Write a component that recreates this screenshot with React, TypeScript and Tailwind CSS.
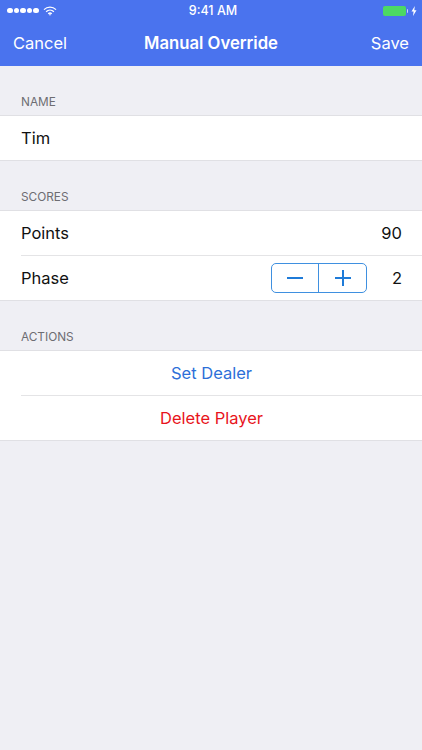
const font = "[font-family:Inter,'Liberation_Sans',sans-serif]";

function Header({ children }: { children: string }) {
  return (
    <div className="h-[50px] px-[21px] flex items-end pb-[7px] text-[11.8px] leading-[14px] text-[#6d6d72] border-b border-[#e0e0e4]">
      <span className="translate-y-[1px]">{children}</span>
    </div>
  );
}

function Row({ children, last }: { children: React.ReactNode; last?: boolean }) {
  return (
    <div className={`h-[45px] bg-white flex items-stretch text-[16.5px] ${last ? "border-b border-[#e0e0e4]" : "pl-[21px]"}`}>
      <div className={`flex-1 flex items-center pr-[20px] pt-[1px] ${last ? "pl-[21px]" : "border-b border-[#e4e4e6]"}`}>{children}</div>
    </div>
  );
}

function Wifi() {
  return (
    <svg width="14" height="10" viewBox="0 0 14 10" fill="none" stroke="white" strokeWidth="1.3" className="ml-[3px]">
      <path d="M1 3.6 C4.4 0.4 9.6 0.4 13 3.6" />
      <path d="M3.1 5.7 C5.3 3.7 8.7 3.7 10.9 5.7" />
      <path d="M5.2 7.7 C6.2 6.9 7.8 6.9 8.8 7.7" />
      <path d="M7 9.8 L5.9 8.6 C6.5 8.2 7.5 8.2 8.1 8.6 Z" fill="white" stroke="none" />
    </svg>
  );
}

export default function App() {
  return (
    <div className={`w-[422px] h-[750px] bg-[#efeff4] overflow-hidden text-[#111] ${font}`}>
      <div className="h-[66px] bg-[#4a73ee] text-white">
        <div className="h-[21px] flex items-center justify-between pl-[7px] pr-[5px] relative">
          <div className="flex items-center gap-[1px]">
            {[0, 1, 2, 3, 4].map((i) => (
              <span key={i} className="w-[5.5px] h-[5.5px] rounded-full bg-white" />
            ))}
            <Wifi />
          </div>
          <div className="absolute left-[4px] right-0 text-center text-[12.5px] font-medium leading-[21px]">9:41 AM</div>
          <div className="flex items-center gap-[1px]">
            <span className="w-[23px] h-[10px] rounded-[2px] bg-[#4cd964]" />
            <span className="w-[1.5px] h-[4px] bg-white/70 rounded-r mr-[2px]" />
            <svg width="6" height="10" viewBox="0 0 6 10" fill="white"><path d="M3.8 0 L0.5 5.6 H2.6 L2 10 L5.5 4.2 H3.3 Z" /></svg>
          </div>
        </div>
        <div className="h-[45px] flex items-center justify-between px-[13px] text-[16.5px] relative">
          <span>Cancel</span>
          <span className="absolute left-0 right-0 text-center font-semibold pointer-events-none text-[16.7px]">Manual Override</span>
          <span>Save</span>
        </div>
      </div>

      <Header>NAME</Header>
      <Row last><span>Tim</span></Row>

      <Header>SCORES</Header>
      <Row>
        <span className="flex-1">Points</span>
        <span>90</span>
      </Row>
      <Row last>
        <span className="flex-1">Phase</span>
        <div className="w-[96px] h-[30px] -mt-[1px] rounded-[5px] border border-[#3f90e0] flex text-[#1f7bd8] mr-[25px]">
          <div className="flex-1 flex items-center justify-center border-r border-[#3f90e0]">
            <svg width="16" height="16" viewBox="0 0 16 16" stroke="currentColor" strokeWidth="2"><path d="M0 8 H16" /></svg>
          </div>
          <div className="flex-1 flex items-center justify-center">
            <svg width="16" height="16" viewBox="0 0 16 16" stroke="currentColor" strokeWidth="2"><path d="M0 8 H16 M8 0 V16" /></svg>
          </div>
        </div>
        <span>2</span>
      </Row>

      <Header>ACTIONS</Header>
      <Row><span className="flex-1 text-center text-[#2d6fd8]">Set Dealer</span></Row>
      <Row last><span className="flex-1 text-center text-[#e8141c]">Delete Player</span></Row>
    </div>
  );
}
